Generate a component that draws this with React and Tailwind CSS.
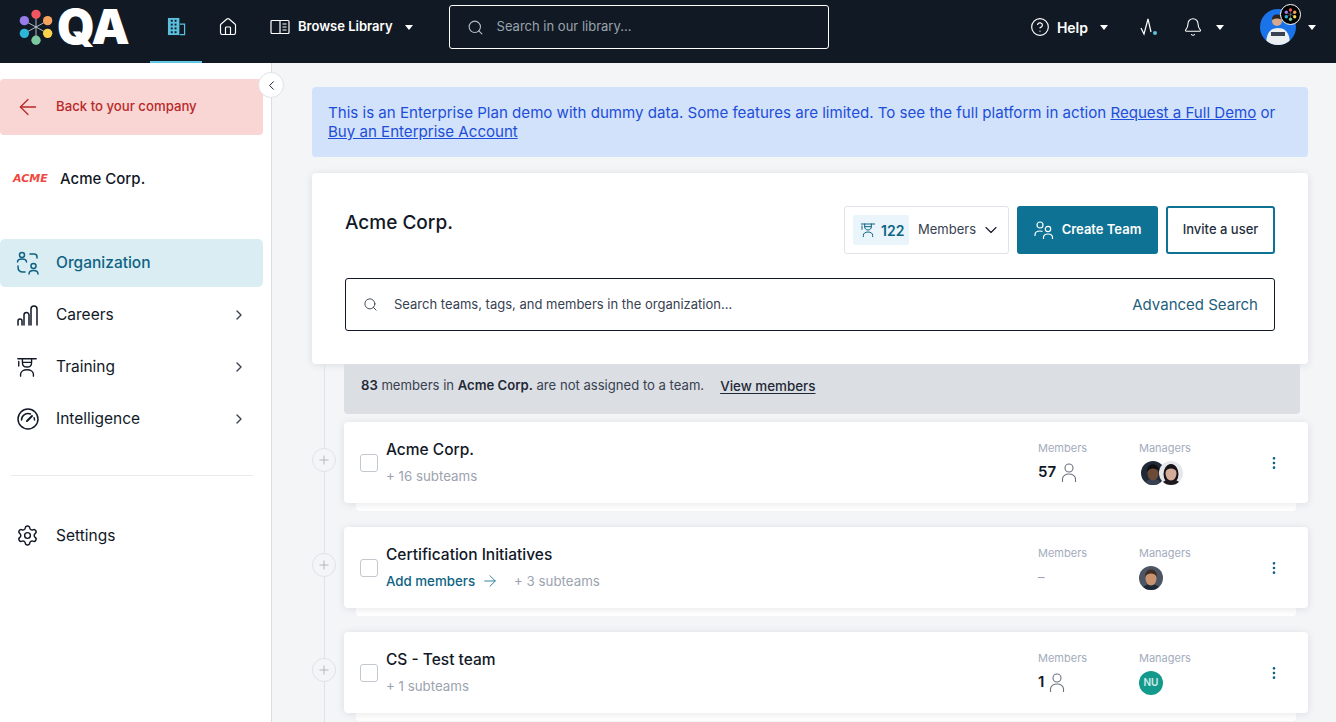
import React from 'react'
import { ArrowLeft, ArrowRight, ChevronDown, ChevronLeft, ChevronRight, CircleHelp, Bell, Home, Plus, Search, Settings, EllipsisVertical } from 'lucide-react'

const font = { fontFamily: 'Inter, "Noto Sans", sans-serif' }

const Caret = () => (
  <span className="block w-0 h-0 border-l-[4px] border-r-[4px] border-t-[5px] border-l-transparent border-r-transparent border-t-white" />
)

const Flower = ({ size = 34 }) => {
  const petals = [
    [17, 5, 4.4, '#f4565f'],
    [28, 11, 4.4, '#f5a25d'],
    [28, 23, 4.4, '#fcd34d'],
    [17, 29.5, 4.4, '#7cc8a0'],
    [6, 23, 4.4, '#2eb6d8'],
    [6, 11, 4.4, '#9a7bea'],
  ]
  return (
    <svg width={size} height={size} viewBox="0 0 34 34">
      {petals.map(([x, y, r, c]) => (
        <g key={c}>
          <line x1="17" y1="17" x2={x} y2={y} stroke="#cbd5e1" strokeWidth="0.8" />
          <circle cx={x} cy={y} r={r} fill={c} />
        </g>
      ))}
    </svg>
  )
}

const TrainIcon = ({ className }) => (
  <svg className={className} viewBox="0 0 24 24" fill="none" stroke="currentColor" strokeWidth="1.5" strokeLinecap="round">
    <path d="M2 3h20M3 6v5M7 3v4c0 3 2 5 5 5s5-2 5-5V3M7 7h10M5 22v-2c0-3 3-5 7-5s7 2 7 5v2" />
  </svg>
)

const OrgIcon = ({ className }) => (
  <svg className={className} viewBox="0 0 24 24" fill="none" stroke="currentColor" strokeWidth="1.5" strokeLinecap="round">
    <circle cx="6" cy="4" r="2.5" />
    <path d="M1.5 11c0-2 2-3 4.500-3s4.500 1 4.500 3" />
    <circle cx="17.500" cy="15" r="2.500" />
    <path d="M13 23c0-2.500 2-3.500 4.500-3.500s4.500 1 4.500 3.500" />
    <path d="M14 3h4c2 0 3 1 3 3v1M2 15v1c0 3 2 5 5 5h2" />
  </svg>
)

const CareerIcon = ({ className }) => (
  <svg className={className} viewBox="0 0 24 24" fill="none" stroke="currentColor" strokeWidth="1.500" strokeLinecap="round">
    <path d="M2 22v-4a2 2 0 0 1 4 0v4M8 22V12a2.500 2.500 0 0 1 5 0v10M15 22V6a3 3 0 0 1 6 0v16" />
  </svg>
)

const GaugeIcon = ({ className }) => (
  <svg className={className} viewBox="0 0 24 24" fill="none" stroke="currentColor" strokeWidth="1.500" strokeLinecap="round">
    <circle cx="12" cy="12" r="10" />
    <path d="M5.500 13a6.500 6.500 0 0 1 9-6M18.500 13c0-.8-.1-1.500-.4-2.200" />
    <path d="M11 14l5-5" strokeWidth="2" />
  </svg>
)

const BuildingIcon = ({ className }) => (
  <svg className={className} viewBox="0 0 20 20">
    <rect x="1" y="1" width="12" height="18" fill="#5bc0de" />
    <path d="M13.500 7.500h5v11h-5" fill="none" stroke="#5bc0de" strokeWidth="1.300" />
    {[4, 8, 12, 16].map((y) => (
      <g key={y} fill="#111a24">
        <rect x="4" y={y - 1} width="2" height="2" />
        <rect x="8" y={y - 1} width="2" height="2" />
      </g>
    ))}
  </svg>
)

const LibraryIcon = ({ className }) => (
  <svg className={className} viewBox="0 0 20 16" fill="none" stroke="white" strokeWidth="1.200">
    <rect x="1" y="1.500" width="18" height="13" rx="1" />
    <path d="M10 1.500v13M12.500 5h4M12.500 8h4M12.500 11h4" />
  </svg>
)

const MiniUser = () => (
  <svg className="w-[16px] h-[20px] text-[#6b7280]" viewBox="0 0 16 20" fill="none" stroke="currentColor" strokeWidth="1.100">
    <circle cx="8" cy="5" r="4" />
    <path d="M1.500 19v-3c0-3 3-5 6.500-5s6.500 2 6.500 5v3" />
  </svg>
)

const Face = ({ id, bg, skin, hair, shirt, longHair, className }) => (
  <svg className={className} viewBox="0 0 24 24">
    <clipPath id={id}><circle cx="12" cy="12" r="12" /></clipPath>
    <g clipPath={`url(#${id})`}>
      <rect width="24" height="24" fill={bg} />
      {longHair && <ellipse cx="12" cy="13" rx="7.500" ry="10" fill={hair} />}
      <ellipse cx="12" cy="27" rx="11" ry="9" fill={shirt} />
      <ellipse cx="12" cy="12.500" rx="5.500" ry="7" fill={skin} />
      <path d="M6 11c0-5 2.500-7.500 6-7.500s6 2.500 6 7.500c-2-3-3.500-3.500-6-3.500s-4 .5-6 3.500z" fill={hair} />
    </g>
  </svg>
)

const NavItem = ({ icon, label, chevron, active }) => (
  <div className={`h-[48px] mb-1 flex items-center pl-[16px] pr-[16px] rounded-[5px] ${active ? 'bg-[#daedf3] text-[#0e6384]' : 'text-[#111827]'}`}>
    <span className="w-[24px] h-[24px] mr-[16px]">{icon}</span>
    <span className={`flex-1 text-[15.5px] ${active ? 'font-medium' : ''}`}>{label}</span>
    {chevron && <ChevronRight className="w-[16px] h-[16px] text-[#374151]" />}
  </div>
)

const TeamRow = ({ name, sub, addMembers, members, managers }) => (
  <div className="flex items-start mb-[24px]">
    <div className="w-[32px] h-[81px] flex items-center justify-start shrink-0">
      <span className="w-[24px] h-[24px] rounded-full border border-[#dfe2e7] bg-[#f4f5f7] flex items-center justify-center -translate-y-[3px]">
        <Plus className="w-[14px] h-[14px] text-[#a9afba]" strokeWidth={1.500} />
      </span>
    </div>
    <div className="relative w-[964px]">
      <div className="absolute left-[12px] right-[12px] -bottom-[8px] h-[16px] bg-white rounded-[4px]" />
      <div className="relative h-[81px] bg-white rounded-[4px] shadow-[0_1px_8px_rgba(17,24,39,0.10)] flex items-center pl-[16px]">
        <span className="w-[18px] h-[18px] rounded-[3px] border border-[#c3c8d0] mr-[8px] shrink-0" />
        <div className="flex-1 pt-[1px]">
          <div className="text-[15.5px] font-medium text-[#111827] leading-[20px] mb-[6px]">{name}</div>
          <div className="flex items-center text-[13.3px] leading-[20px] text-[#9ca3af]">
            {addMembers && (
              <span className="flex items-center text-[#0e6384] font-medium mr-[15px]">
                Add members <ArrowRight className="w-[18px] h-[18px] ml-[6px] text-[#2f819c]" strokeWidth={1.300} />
              </span>
            )}
            {sub}
          </div>
        </div>
        <div className="w-[101px]">
          <div className="text-[11px] leading-[14px] text-[#a3acbd] mb-[6px]">Members</div>
          <div className="flex items-center h-[24px] mt-[1px] gap-[5px] text-[15px] font-semibold text-[#111827]">
            {members ? <>{members} <MiniUser /></> : <span className="text-[#9ca3af] font-normal text-[13px]">–</span>}
          </div>
        </div>
        <div className="w-[127px]">
          <div className="text-[11px] leading-[14px] text-[#a3acbd] mb-[6px]">Managers</div>
          <div className="flex h-[24px] mt-[1px] items-center">{managers}</div>
        </div>
        <EllipsisVertical className="w-[16px] h-[16px] text-[#0e6384] mr-[26px]" />
      </div>
    </div>
  </div>
)

export default function App() {
  return (
    <div className="h-[722px] overflow-hidden bg-[#f4f5f7] flex flex-col" style={font}>
      <header className="h-[63px] bg-[#111a24] flex items-center shrink-0 text-white pb-[9px]">
        <div className="w-[150px] flex items-center pl-[18px]">
          <Flower size={36} />
          <span className="text-[48px] leading-[54px] font-black tracking-[-1px] ml-[3px] pr-[4px]">QA</span>
        </div>
        <div className="w-[52px] h-[63px] -mb-[9px] pb-[9px] flex items-center justify-center border-b-[2px] border-[#63c7e4]">
          <BuildingIcon className="w-[19px] h-[19px]" />
        </div>
        <Home className="w-[20px] h-[20px] ml-[16px]" strokeWidth={1.400} />
        <LibraryIcon className="w-[20px] h-[16px] ml-[32px]" />
        <span className="ml-[8px] text-[13px] font-semibold">Browse Library</span>
        <span className="ml-[12px] mr-[36px]"><Caret /></span>
        <div className="w-[380px] h-[44px] border border-white rounded-[3px] flex items-center pl-[17px]">
          <Search className="w-[17px] h-[17px] text-[#b5c0cc]" strokeWidth={1.500} />
          <span className="ml-[13px] text-[13px] text-[#9aa3ae]">Search in our library...</span>
        </div>
        <div className="flex-1" />
        <CircleHelp className="w-[20px] h-[20px]" strokeWidth={1.400} />
        <span className="ml-[7px] text-[14px] font-semibold">Help</span>
        <span className="ml-[12px]"><Caret /></span>
        <svg className="w-[18px] h-[20px] ml-[32px]" viewBox="0 0 18 20" fill="none">
          <path d="M1 11l3 6 4-15 3 13" stroke="white" strokeWidth="1.200" />
          <circle cx="15" cy="16" r="2" fill="#5bc0de" />
        </svg>
        <Bell className="w-[20px] h-[20px] ml-[25px]" strokeWidth={1.300} />
        <span className="ml-[13px]"><Caret /></span>
        <div className="relative w-[36px] h-[36px] ml-[36px]">
          <svg className="w-[36px] h-[36px]" viewBox="0 0 36 36">
            <clipPath id="me"><circle cx="18" cy="18" r="18" /></clipPath>
            <g clipPath="url(#me)">
              <rect width="36" height="36" fill="#1a73e8" />
              <path d="M6 36c0-13 5-17 12-17s12 4 12 17z" fill="#eceff1" />
              <circle cx="17" cy="12" r="5" fill="#d7a98c" />
              <path d="M12 11c0-4 2-5.500 5-5.500s5 1.500 5 5.500c-3-2-7-2-10 0z" fill="#2b2320" />
              <rect x="11" y="23" width="14" height="4" fill="#374151" />
            </g>
          </svg>
          <span className="absolute -top-[5px] -right-[5px] w-[21px] h-[21px] rounded-full bg-black border border-white flex items-center justify-center">
            <Flower size={13} />
          </span>
        </div>
        <span className="ml-[12px] mr-[20px]"><Caret /></span>
      </header>

      <div className="flex flex-1 min-h-0">
        <aside className="relative w-[272px] shrink-0 bg-white border-r border-[#d9dce1] pr-[8px] pt-[16px]">
          <span className="absolute top-[9px] -right-[13px] w-[26px] h-[26px] rounded-full bg-white border border-[#dfe2e7] flex items-center justify-center">
            <ChevronLeft className="w-[15px] h-[15px] text-[#111827]" strokeWidth={1.500} />
          </span>
          <div className="h-[56px] bg-[#f9d5d3] rounded-[4px] flex items-center pl-[15px] text-[#b72a2a]">
            <ArrowLeft className="w-[26px] h-[26px] mr-[15px]" strokeWidth={1.200} />
            <span className="text-[13.2px] font-medium">Back to your company</span>
          </div>
          <div className="flex items-center mt-[29px] pl-[13px] h-[30px]">
            <span className="w-[47px] text-[11px] font-bold italic text-[#f0483e]" style={{ fontFamily: '"DejaVu Sans", sans-serif' }}>ACME</span>
            <span className="text-[15px] font-medium text-[#111827]">Acme Corp.</span>
          </div>
          <div className="mt-[45px]">
            <NavItem active label="Organization" icon={<OrgIcon className="w-[24px] h-[24px]" />} />
            <NavItem chevron label="Careers" icon={<CareerIcon className="w-[24px] h-[24px]" />} />
            <NavItem chevron label="Training" icon={<TrainIcon className="w-[22px] h-[24px]" />} />
            <NavItem chevron label="Intelligence" icon={<GaugeIcon className="w-[24px] h-[24px]" />} />
          </div>
          <div className="h-px bg-[#e8eaee] ml-[11px] mr-[10px] mt-[32px] mb-[36px]" />
          <NavItem label="Settings" icon={<Settings className="w-[23px] h-[23px]" strokeWidth={1.500} />} />
        </aside>

        <main className="flex-1 min-w-0 pl-[40px] pr-[28px] pt-[24px]">
          <div className="h-[70px] bg-[#d2e2fb] rounded-[4px] px-[16px] py-[16px] text-[15.08px] leading-[19px] text-[#1d4ed8]">
            This is an Enterprise Plan demo with dummy data. Some features are limited. To see the full platform in action <u>Request a Full Demo</u> or <u>Buy an Enterprise Account</u>
          </div>

          <section className="relative mt-[16px] h-[191px] bg-white rounded-[4px] shadow-[0_1px_8px_rgba(17,24,39,0.10)] px-[33px] pt-[33px]">
            <div className="flex items-start">
              <h1 className="flex-1 text-[19px] font-medium text-[#111827] leading-[34px]">Acme Corp.</h1>
              <div className="h-[48px] w-[165px] border border-[#dfe2e7] rounded-[3px] flex items-center pl-[8px] mr-[8px]">
                <span className="h-[30px] w-[56px] bg-[#e9f5fa] rounded-[3px] flex items-center pl-[7px] text-[#0e6384] text-[14px] font-semibold">
                  <TrainIcon className="w-[16px] h-[18px] mr-[5px]" />122
                </span>
                <span className="ml-[9px] text-[13px] text-[#374151]">Members</span>
                <ChevronDown className="w-[20px] h-[20px] ml-[5px] text-[#111827]" strokeWidth={1.300} />
              </div>
              <div className="h-[48px] w-[141px] bg-[#0e7294] rounded-[3px] flex items-center justify-center text-white text-[13px] font-semibold mr-[8px]">
                <svg className="w-[20px] h-[20px] mr-[8px]" viewBox="0 0 20 20" fill="none" stroke="white" strokeWidth="1.200">
                  <circle cx="6" cy="5" r="3" /><path d="M1 16v-1c0-3 2-4 5-4 1 0 2 .2 2.500.5" /><circle cx="14" cy="9" r="2.700" /><path d="M9.500 19v-1.500c0-2.500 2-3.500 4.500-3.500s4.500 1 4.500 3.500V19" />
                </svg>
                Create Team
              </div>
              <div className="h-[48px] w-[109px] border-[2px] border-[#0e7294] rounded-[3px] flex items-center justify-center text-[13px] font-medium text-[#1f2f3d]">Invite a user</div>
            </div>
            <div className="mt-[24px] h-[53px] border border-[#111827] rounded-[3px] flex items-center pl-[17px] pr-[16px]">
              <Search className="w-[15px] h-[15px] text-[#374151]" strokeWidth={1.500} />
              <span className="ml-[16px] flex-1 text-[13px] text-[#374151]">Search teams, tags, and members in the organization...</span>
              <span className="text-[15px] text-[#1f5f7d] translate-y-[1px]">Advanced Search</span>
            </div>
          </section>

          <div className="relative">
            <span className="absolute left-[12px] top-0 h-[400px] w-px bg-[#dfe2e7]" />
            <div className="relative ml-[32px] mr-[8px] h-[50px] bg-[#dbdee3] rounded-b-[4px] flex items-center pl-[17px] pb-[6px] text-[13.1px] text-[#374151]">
              <b className="font-semibold text-[#1f2937]">83</b>&nbsp;members in&nbsp;<b className="font-semibold text-[#1f2937]">Acme Corp.</b>&nbsp;are not assigned to a team.
              <span className="ml-[16px] text-[13.4px] font-medium text-[#1f2937] underline underline-offset-2">View members</span>
            </div>
            <div className="relative pt-[8px]">
              <TeamRow name="Acme Corp." sub="+ 16 subteams" members="57" managers={<>
                <Face id="m1" bg="#1f2937" skin="#6b4a38" hair="#0f0f12" shirt="#374151" className="w-[24px] h-[24px] ml-[2px]" />
                <Face id="m2" bg="#e5e7eb" skin="#d4ab98" hair="#17131a" shirt="#1f1a1f" longHair className="w-[24px] h-[24px] -ml-[6px]" />
              </>} />
              <TeamRow name="Certification Initiatives" addMembers sub="+ 3 subteams" managers={<Face id="m3" bg="#4b5563" skin="#c9936f" hair="#3f2e25" shirt="#1f2937" className="w-[24px] h-[24px]" />} />
              <TeamRow name="CS - Test team" sub="+ 1 subteams" members="1" managers={<span className="w-[24px] h-[24px] rounded-full bg-[#149a8c] text-white/80 text-[10px] font-semibold flex items-center justify-center">NU</span>} />
            </div>
          </div>
        </main>
      </div>
    </div>
  )
}
